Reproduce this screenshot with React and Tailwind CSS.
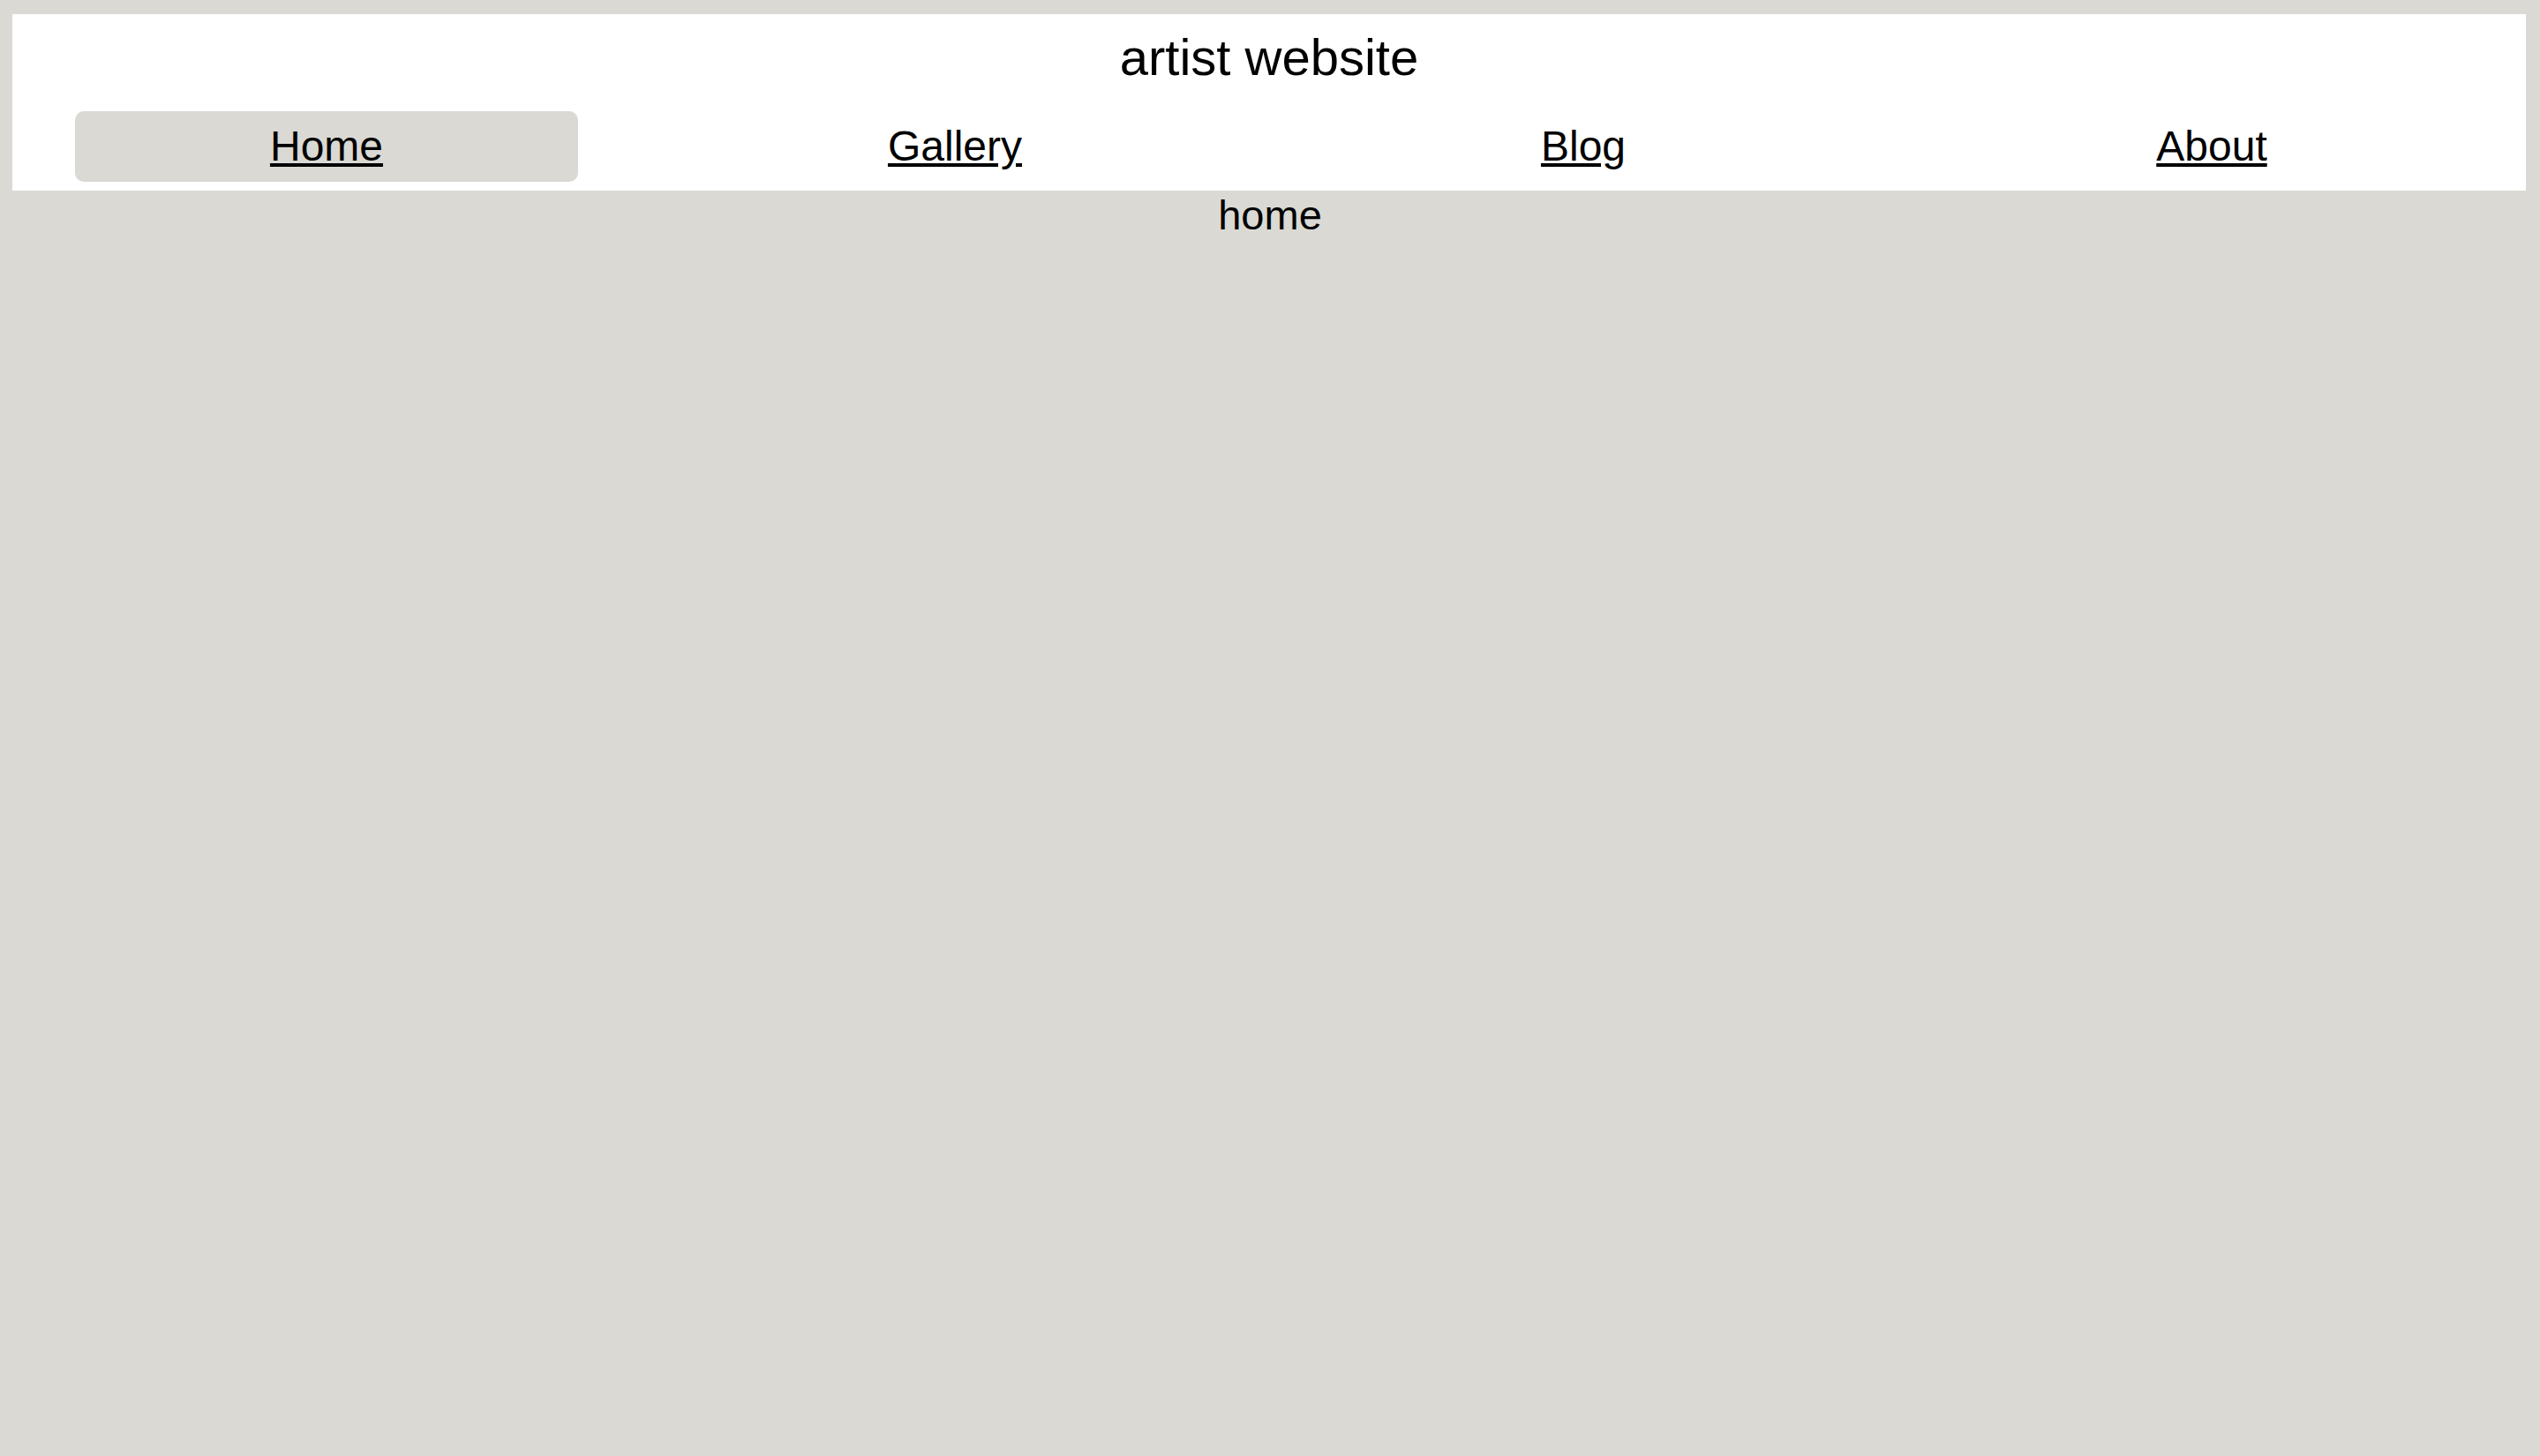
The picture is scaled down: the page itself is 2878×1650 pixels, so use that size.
const links = [
  { label: "Home", active: true },
  { label: "Gallery" },
  { label: "Blog" },
  { label: "About" },
];

export default function App() {
  return (
    <div className="min-h-[1650px] bg-[#dad9d4] pt-[16px] text-black" style={{ fontFamily: '"Liberation Sans", Arial, sans-serif' }}>
      <header className="ml-[14px] mr-[16px] bg-white pt-[20px] pb-[10px]">
        <h1 className="text-center text-[58px] font-normal leading-[58px]">artist website</h1>
        <nav className="mt-[32px] grid grid-cols-4">
          {links.map((link) => (
            <div key={link.label} className="px-[71px]">
              <a
                href="#"
                className={
                  link.active
                    ? "flex h-[80px] items-center justify-center rounded-[10px] bg-[#dad9d4] text-[48px] leading-[48px] underline"
                    : "flex h-[80px] items-center justify-center rounded-[10px] text-[48px] leading-[48px] underline"
                }
              >
                {link.label}
              </a>
            </div>
          ))}
        </nav>
      </header>
      <main className="mt-[5px] text-center text-[47px] leading-[46px]">home</main>
    </div>
  );
}
